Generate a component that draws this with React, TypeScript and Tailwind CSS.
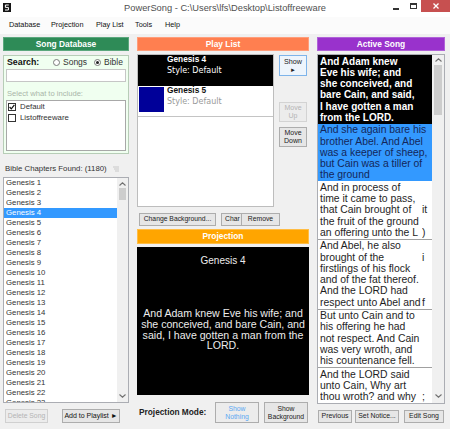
import React from "react";

type Line = string | [string, string];

const Up = () => (
  <svg width="7" height="4" viewBox="0 0 7 4" className="block">
    <polyline points="0.5,3.5 3.5,0.8 6.5,3.5" fill="none" stroke="#707070" strokeWidth="1.1" />
  </svg>
);
const Down = () => (
  <svg width="7" height="4" viewBox="0 0 7 4" className="block">
    <polyline points="0.5,0.5 3.5,3.2 6.5,0.5" fill="none" stroke="#707070" strokeWidth="1.1" />
  </svg>
);

const activeItems: { cls: string; lines: Line[]; sep: boolean }[] = [
  {
    cls: "bg-black text-white font-bold text-[10px]",
    sep: false,
    lines: ["And Adam knew", "Eve his wife; and", "she conceived, and", "bare Cain, and said,", "I have gotten a man", "from the LORD."],
  },
  {
    cls: "bg-[#3399ff] text-[#13275a] text-[10.4px]",
    sep: false,
    lines: ["And she again bare his", "brother Abel. And Abel", "was a keeper of sheep,", "but Cain was a tiller of", "the ground"],
  },
  {
    cls: "text-[#1e1e1e] text-[10.4px]",
    sep: true,
    lines: ["And in process of", "time it came to pass,", ["that Cain brought of", "it"], "the fruit of the ground", ["an offering unto the L", ")"]],
  },
  {
    cls: "text-[#1e1e1e] text-[10.4px]",
    sep: true,
    lines: ["And Abel, he also", ["brought of the", "i"], "firstlings of his flock", "and of the fat thereof.", "And the LORD had", ["respect unto Abel and", "f"]],
  },
  {
    cls: "text-[#1e1e1e] text-[10.4px]",
    sep: true,
    lines: ["But unto Cain and to", "his offering he had", "not respect. And Cain", "was very wroth, and", "his countenance fell."],
  },
  {
    cls: "text-[#1e1e1e] text-[10.4px]",
    sep: false,
    lines: ["And the LORD said", "unto Cain, Why art", ["thou wroth? and why", ";"]],
  },
];

const chapters = Array.from({ length: 23 }, (_, i) => i + 1);

export default function App() {
  return (
    <div className="w-[450px] h-[429px] overflow-hidden bg-[#f0f0f0] flex flex-col font-['Liberation_Sans',Arial,sans-serif] text-black">
      {/* Title bar */}
      <div className="h-[17px] shrink-0 bg-white flex items-start">
        <div className="w-[60px] h-full">
          <div className="mt-[3px] ml-[3px] w-[8px] h-[9px] bg-[#151515] flex items-center justify-center">
            <svg width="6" height="7" viewBox="0 0 6 7">
              <path d="M4.8 1 H1.4 V3.4 H4.4 V6 H1" fill="none" stroke="#fff" strokeWidth="1" />
            </svg>
          </div>
        </div>
        <div className="flex-1 text-center text-[9.3px] leading-[16px] text-[#505050] whitespace-nowrap">
          PowerSong - C:\Users\lfs\Desktop\Listoffreeware
        </div>
        <div className="w-[60px] h-full flex items-start">
          <div className="ml-[3px] mt-[8px] w-[6px] h-[1.5px] bg-[#333]" />
          <div className="ml-[11px] mt-[3px] w-[7px] h-[6px] border border-[#333] border-t-2" />
          <div className="ml-[4px] w-[29px] h-[12px] bg-[#c75050] flex items-center justify-center">
            <svg width="6" height="6" viewBox="0 0 6 6">
              <path d="M0.5 0.5 L5.5 5.5 M5.5 0.5 L0.5 5.5" stroke="#fff" strokeWidth="1.3" />
            </svg>
          </div>
        </div>
      </div>

      {/* Menu bar */}
      <div className="h-[17px] shrink-0 bg-[#fbfbfb] flex items-center pl-[9px] text-[7.3px] text-[#111]">
        <span className="w-[42px]">Database</span>
        <span className="w-[45px]">Projection</span>
        <span className="w-[39px]">Play List</span>
        <span className="w-[30px]">Tools</span>
        <span>Help</span>
      </div>

      {/* Content */}
      <div className="flex-1 flex pl-[3px] pt-[3px]">
        {/* Left column */}
        <div className="w-[126px] flex flex-col">
          <div className="h-[14px] bg-[#2e8b57] border border-[#5ba77d] text-white font-bold text-[8.4px] flex items-center justify-center">
            Song Database
          </div>
          <div className="mt-[4px] h-[99px] border border-[#b7cdb7] bg-[#f0fff0] flex flex-col px-[2px]">
            <div className="h-[13px] flex items-center">
              <span className="w-[47px] pl-[1px] font-bold text-[8.8px] text-[#111]">Search:</span>
              <span className="w-[41px] flex items-center">
                <span className="w-[7px] h-[7px] rounded-full border border-[#7a7a7a] bg-white" />
                <span className="ml-[3px] text-[8.5px] text-[#333]">Songs</span>
              </span>
              <span className="flex items-center">
                <span className="w-[7px] h-[7px] rounded-full border border-[#7a7a7a] bg-white flex items-center justify-center">
                  <span className="w-[3px] h-[3px] rounded-full bg-[#222]" />
                </span>
                <span className="ml-[3px] text-[8.5px] text-[#333]">Bible</span>
              </span>
            </div>
            <div className="h-[13px] bg-white border border-[#c6c6c6]" />
            <div className="mt-[6px] h-[12px] flex items-center pl-[1px] text-[7.6px] text-[#a9b5a9]">Select what to include:</div>
            <div className="flex-1 mb-[2px] bg-white border border-[#a8a8a8] flex flex-col">
              <div className="h-[11px] flex items-center pl-[1px]">
                <span className="w-[8px] h-[8px] border border-[#333] bg-white flex items-center justify-center">
                  <svg width="6" height="6" viewBox="0 0 6 6">
                    <polyline points="0.6,3 2.3,4.8 5.4,0.8" fill="none" stroke="#111" strokeWidth="1.2" />
                  </svg>
                </span>
                <span className="ml-[4px] text-[7.8px] text-[#333]">Default</span>
              </div>
              <div className="h-[12px] flex items-center pl-[1px]">
                <span className="w-[8px] h-[8px] border border-[#333] bg-white" />
                <span className="ml-[4px] text-[7.8px] text-[#333]">Listoffreeware</span>
              </div>
            </div>
          </div>
          <div className="mt-[9px] h-[12px] flex items-center pl-[2px] text-[7.8px] text-[#333]">
            <span>Bible Chapters Found: (1180)</span>
            <svg width="6" height="6" viewBox="0 0 6 6" className="ml-[6px]">
              <path d="M0 1 H6 M1 3 H6 M2 5 H6" stroke="#c8c8c8" strokeWidth="1" />
            </svg>
          </div>
          <div className="mt-[2px] h-[226px] border border-[#abadb3] bg-white flex overflow-hidden">
            <div className="flex-1 overflow-hidden">
              {chapters.map((n) => (
                <div
                  key={n}
                  className={
                    n === 4
                      ? "h-[10px] leading-[10px] pl-[2px] text-[7.8px] bg-[#3399ff] text-white whitespace-nowrap"
                      : "h-[10px] leading-[10px] pl-[2px] text-[7.8px] text-[#333] whitespace-nowrap"
                  }
                >
                  Genesis {n}
                </div>
              ))}
            </div>
            <div className="w-[11px] bg-[#f0f0f0] flex flex-col items-center">
              <div className="mt-[4px]"><Up /></div>
              <div className="mt-[2px] w-[7px] h-[12px] bg-[#cdcdcd]" />
              <div className="flex-1" />
              <div className="mb-[4px]"><Down /></div>
            </div>
          </div>
          <div className="mt-[6px] h-[14px] flex">
            <div className="ml-[2px] w-[43px] border border-[#d0d0d0] bg-[#ececec] text-[6.8px] text-[#b4b4b4] flex items-center justify-center whitespace-nowrap">Delete Song</div>
            <div className="ml-[14px] w-[58px] border border-[#adadad] bg-[#e6e6e6] text-[7px] text-[#111] flex items-center justify-center whitespace-nowrap">Add to Playlist ►</div>
          </div>
        </div>

        {/* Middle column */}
        <div className="ml-[8px] w-[172px] flex flex-col">
          <div className="h-[14px] bg-[#ff7f50] border border-[#ff9d7a] text-white font-bold text-[8.4px] flex items-center justify-center">
            Play List
          </div>
          <div className="mt-[3px] h-[153px] flex">
            <div className="w-[137px] border border-[#bdbdbd] bg-white flex flex-col overflow-hidden">
              <div className="h-[31px] bg-black flex">
                <div className="ml-[1px] mt-[1px] w-[25px] h-[25px]" />
                <div className="ml-[3px] flex flex-col">
                  <div className="font-bold text-[8.3px] leading-[9px] text-white">Genesis 4</div>
                  <div className="mt-[1px] font-['DejaVu_Sans',sans-serif] text-[8px] leading-[12px] text-white">Style: Default</div>
                </div>
              </div>
              <div className="h-[31px] flex border-b border-[#c4c4c4]">
                <div className="ml-[1px] mt-[1px] w-[25px] h-[25px] bg-[#000099]" />
                <div className="ml-[3px] flex flex-col">
                  <div className="font-bold text-[8.3px] leading-[9px] text-[#111]">Genesis 5</div>
                  <div className="mt-[1px] font-['DejaVu_Sans',sans-serif] text-[8px] leading-[12px] text-[#9a9a9a]">Style: Default</div>
                </div>
              </div>
            </div>
            <div className="ml-[5px] w-[28px] flex flex-col">
              <div className="mt-[1px] h-[21px] border border-[#7eb4ea] bg-[#eef5fc] flex flex-col items-center justify-center text-[7.2px] leading-[8px] text-[#222]">
                <span>Show</span>
                <span className="text-[6px]">►</span>
              </div>
              <div className="mt-[26px] h-[20px] border border-[#d3d3d3] bg-[#ececec] flex flex-col items-center justify-center text-[7px] leading-[8px] text-[#b4b4b4]">
                <span>Move</span>
                <span>Up</span>
              </div>
              <div className="mt-[5px] h-[20px] border border-[#adadad] bg-[#e6e6e6] flex flex-col items-center justify-center text-[7px] leading-[8px] text-[#222]">
                <span>Move</span>
                <span>Down</span>
              </div>
            </div>
          </div>
          <div className="mt-[6px] h-[13px] flex">
            <div className="ml-[2px] w-[77px] border border-[#adadad] bg-[#e6e6e6] text-[6.8px] text-[#222] flex items-center justify-center whitespace-nowrap">Change Background...</div>
            <div className="ml-[5px] w-[21px] border border-[#adadad] bg-[#e6e6e6] text-[6.8px] text-[#222] flex items-center pl-[3px] overflow-hidden whitespace-nowrap">Char</div>
            <div className="-ml-[1px] w-[39px] border border-[#adadad] bg-[#e6e6e6] text-[6.8px] text-[#222] flex items-center justify-center">Remove</div>
          </div>
          <div className="mt-[3px] h-[15px] bg-[#ffa500] border border-[#ffbd45] text-white font-bold text-[8.4px] flex items-center justify-center">
            Projection
          </div>
          <div className="mt-[3px] h-[148px] bg-black flex flex-col items-center text-[#ececec]">
            <div className="mt-[8px] text-[10px] leading-[12px]">Genesis 4</div>
            <div className="mt-[41px] text-[10.6px] leading-[10.8px] text-center whitespace-nowrap">
              <div>And Adam knew Eve his wife; and</div>
              <div>she conceived, and bare Cain, and</div>
              <div>said, I have gotten a man from the</div>
              <div>LORD.</div>
            </div>
          </div>
          <div className="mt-[7px] h-[21px] flex items-center">
            <div className="ml-[2px] w-[76px] font-bold text-[8.3px] text-[#222] whitespace-nowrap">Projection Mode:</div>
            <div className="w-[44px] h-full border border-[#adadad] bg-[#ececec] flex flex-col items-center justify-center text-[6.8px] leading-[8px] text-[#5aa8f2]">
              <span>Show</span>
              <span>Nothing</span>
            </div>
            <div className="ml-[5px] w-[44px] h-full border border-[#adadad] bg-[#e6e6e6] flex flex-col items-center justify-center text-[6.8px] leading-[8px] text-[#222]">
              <span>Show</span>
              <span>Background</span>
            </div>
          </div>
        </div>

        {/* Right column */}
        <div className="ml-[8px] w-[128px] flex flex-col">
          <div className="h-[14px] bg-[#9932cc] border border-[#b062d8] text-white font-bold text-[8.4px] flex items-center justify-center">
            Active Song
          </div>
          <div className="mt-[3px] h-[350px] border border-[#abadb3] bg-white flex overflow-hidden">
            <div className="flex-1 overflow-hidden">
              {activeItems.map((it, i) => (
                <div
                  key={i}
                  className={
                    (it.sep ? "border-b border-[#a0a0a0] " : "") +
                    "py-[0.5px] pl-[2px] leading-[11.3px] whitespace-nowrap " +
                    it.cls
                  }
                >
                  {it.lines.map((l, j) =>
                    typeof l === "string" ? (
                      <div key={j}>{l}</div>
                    ) : (
                      <div key={j} className="flex">
                        <span className="flex-1 overflow-hidden">{l[0]}</span>
                        <span className="w-[10px] overflow-hidden">{l[1]}</span>
                      </div>
                    )
                  )}
                </div>
              ))}
            </div>
            <div className="w-[12px] bg-[#f0f0f0] flex flex-col items-center">
              <div className="mt-[3px]"><Up /></div>
              <div className="mt-[3px] w-[8px] h-[50px] bg-[#cdcdcd]" />
              <div className="flex-1" />
              <div className="mb-[5px]"><Down /></div>
            </div>
          </div>
          <div className="mt-[6px] h-[13px] flex">
            <div className="ml-[1px] w-[34px] border border-[#adadad] bg-[#e6e6e6] text-[6.9px] text-[#222] flex items-center justify-center">Previous</div>
            <div className="ml-[3px] w-[44px] border border-[#adadad] bg-[#e6e6e6] text-[6.9px] text-[#222] flex items-center justify-center whitespace-nowrap">Set Notice...</div>
            <div className="ml-[5px] w-[40px] border border-[#adadad] bg-[#e6e6e6] text-[6.9px] text-[#222] flex items-center justify-center whitespace-nowrap">Edit Song</div>
          </div>
        </div>
      </div>
    </div>
  );
}
